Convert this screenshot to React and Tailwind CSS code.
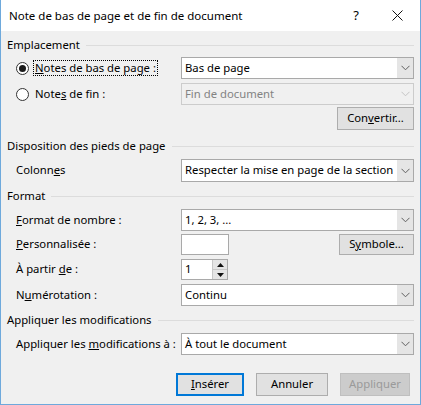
import React from "react";

const FONT = { fontFamily: '"Segoe UI", "Noto Sans", sans-serif' };

const Chevron = ({ color = "#606060" }) => (
  <svg width="9" height="6" viewBox="0 0 9 6">
    <path d="M0.5 0.8 L4.5 4.8 L8.5 0.8" fill="none" stroke={color} strokeWidth="1" />
  </svg>
);

/* combo box like the Office dialog */
const Select = ({ value, disabled }) => (
  <div
    className={
      "flex flex-1 min-w-0 h-full items-stretch border " +
      (disabled ? "border-[#cccccc] bg-[#f0f0f0] text-[#838383]" : "border-[#a9a9a9] bg-white text-black")
    }
  >
    <div className="flex-1 min-w-0 flex items-center pl-[3px] whitespace-nowrap overflow-hidden">{value}</div>
    <div
      className={
        "w-[16px] shrink-0 flex items-center justify-center " +
        (disabled ? "bg-[#f0f0f0]" : "bg-[#e5e5e5]")
      }
    >
      <Chevron color={disabled ? "#c4c4c4" : "#606060"} />
    </div>
  </div>
);

const Section = ({ title }) => (
  <div className="flex items-center h-[16px] gap-[6px]">
    <span className="whitespace-nowrap">{title}</span>
    <div className="flex-1 h-px bg-[#dcdcdc]" />
  </div>
);

const Row = ({ label, children, className = "" }) => (
  <div className={"flex items-center pl-[9px] " + className}>
    <div className="w-[165px] shrink-0 whitespace-nowrap">{label}</div>
    <div className="flex-1 min-w-0 flex h-full items-stretch">{children}</div>
  </div>
);

const Btn = ({ children, className = "" }) => (
  <div
    className={
      "flex items-center justify-center border border-[#adadad] bg-[#e1e1e1] " + className
    }
  >
    {children}
  </div>
);

const Radio = ({ checked }) => (
  <div className="w-[13px] h-[13px] rounded-full border border-[#333] bg-white flex items-center justify-center">
    {checked && <div className="w-[7px] h-[7px] rounded-full bg-[#1a1a1a]" />}
  </div>
);

export default function App() {
  return (
    <div
      className="w-[421px] h-[405px] bg-[#f0f0f0] border-l border-r border-b border-[#6ea9dc] flex flex-col text-[11.3px] text-black"
      style={FONT}
    >
      {/* title bar */}
      <div className="h-[31px] bg-white flex items-center pl-[8px] text-[11.5px]">
        <span className="flex-1">Note de bas de page et de fin de document</span>
        <span className="w-[20px] text-center mr-[24px] text-[13px]">?</span>
        <div className="w-[14px] mr-[16px] flex items-center justify-center">
          <svg width="11" height="11" viewBox="0 0 11 11">
            <path d="M0.5 0.5 L10.5 10.5 M10.5 0.5 L0.5 10.5" stroke="#111" strokeWidth="1" />
          </svg>
        </div>
      </div>

      <div className="flex flex-col px-[6px]">
        <div className="mt-[6px]">
          <Section title="Emplacement" />
        </div>

        {/* row 1 */}
        <div className="flex items-center h-[22px] mt-[4px] pl-[9px]">
          <div className="w-[165px] shrink-0 flex items-center gap-[4px]">
            <Radio checked />
            <span className="border border-dotted border-black px-[1px] leading-[14px]">
              <u>N</u>otes de bas de page :
            </span>
          </div>
          <div className="flex-1 min-w-0 flex h-full">
            <Select value="Bas de page" />
          </div>
        </div>

        {/* row 2 */}
        <div className="flex items-center h-[22px] mt-[4px] pl-[9px]">
          <div className="w-[165px] shrink-0 flex items-center gap-[4px]">
            <Radio />
            <span className="px-[2px]">
              Note<u>s</u> de fin :
            </span>
          </div>
          <div className="flex-1 min-w-0 flex h-full">
            <Select value="Fin de document" disabled />
          </div>
        </div>

        <div className="flex justify-end mt-[2px]">
          <Btn className="w-[77px] h-[23px]">
            <span>
              Con<u>v</u>ertir...
            </span>
          </Btn>
        </div>

        <div className="mt-[8px]">
          <Section title="Disposition des pieds de page" />
        </div>
        <Row className="h-[23px] mt-[5px]" label={<span>Colonn<u>e</u>s</span>}>
          <Select value="Respecter la mise en page de la section" />
        </Row>

        <div className="mt-[6px]">
          <Section title="Format" />
        </div>
        <Row className="h-[22px] mt-[5px]" label={<span><u>F</u>ormat de nombre :</span>}>
          <Select value="1, 2, 3, ..." />
        </Row>
        <Row className="h-[21px] mt-[3px]" label={<span><u>P</u>ersonnalisée :</span>}>
          <div className="flex flex-1 items-stretch justify-between">
            <div className="w-[48px] border border-[#a9a9a9] bg-white" />
            <Btn className="w-[75px]">
              <span>
                S<u>y</u>mbole...
              </span>
            </Btn>
          </div>
        </Row>
        <Row className="h-[21px] mt-[4px]" label={<span>À partir <u>d</u>e :</span>}>
          <div className="w-[47px] border border-[#a9a9a9] bg-white flex">
            <div className="flex-1 flex items-center pl-[3px]">1</div>
            <div className="w-[15px] flex flex-col border-l border-[#c8c8c8] bg-[#e5e5e5]">
              <div className="flex-1 flex items-center justify-center border-b border-[#c8c8c8]">
                <svg width="7" height="4" viewBox="0 0 7 4">
                  <path d="M0 4 L3.5 0 L7 4 Z" fill="#111" />
                </svg>
              </div>
              <div className="flex-1 flex items-center justify-center">
                <svg width="7" height="4" viewBox="0 0 7 4">
                  <path d="M0 0 L3.5 4 L7 0 Z" fill="#111" />
                </svg>
              </div>
            </div>
          </div>
        </Row>
        <Row className="h-[22px] mt-[4px]" label={<span>N<u>u</u>mérotation :</span>}>
          <Select value="Continu" />
        </Row>

        <div className="mt-[6px]">
          <Section title="Appliquer les modifications" />
        </div>
        <Row className="h-[22px] mt-[5px]" label={<span>Appliquer les <u>m</u>odifications à :</span>}>
          <Select value="À tout le document" />
        </Row>

        {/* buttons */}
        <div className="flex justify-end h-[23px] mt-[18px] gap-[12px] pr-[4px]">
          <div className="w-[68px] flex items-center justify-center border-2 border-[#0078d7] bg-[#e1e1e1]">
            <span>
              <u>I</u>nsérer
            </span>
          </div>
          <Btn className="w-[72px]">Annuler</Btn>
          <div className="w-[70px] flex items-center justify-center border border-[#bfbfbf] bg-[#cccccc] text-[#9a9a9a]">
            Appliquer
          </div>
        </div>
      </div>
    </div>
  );
}
